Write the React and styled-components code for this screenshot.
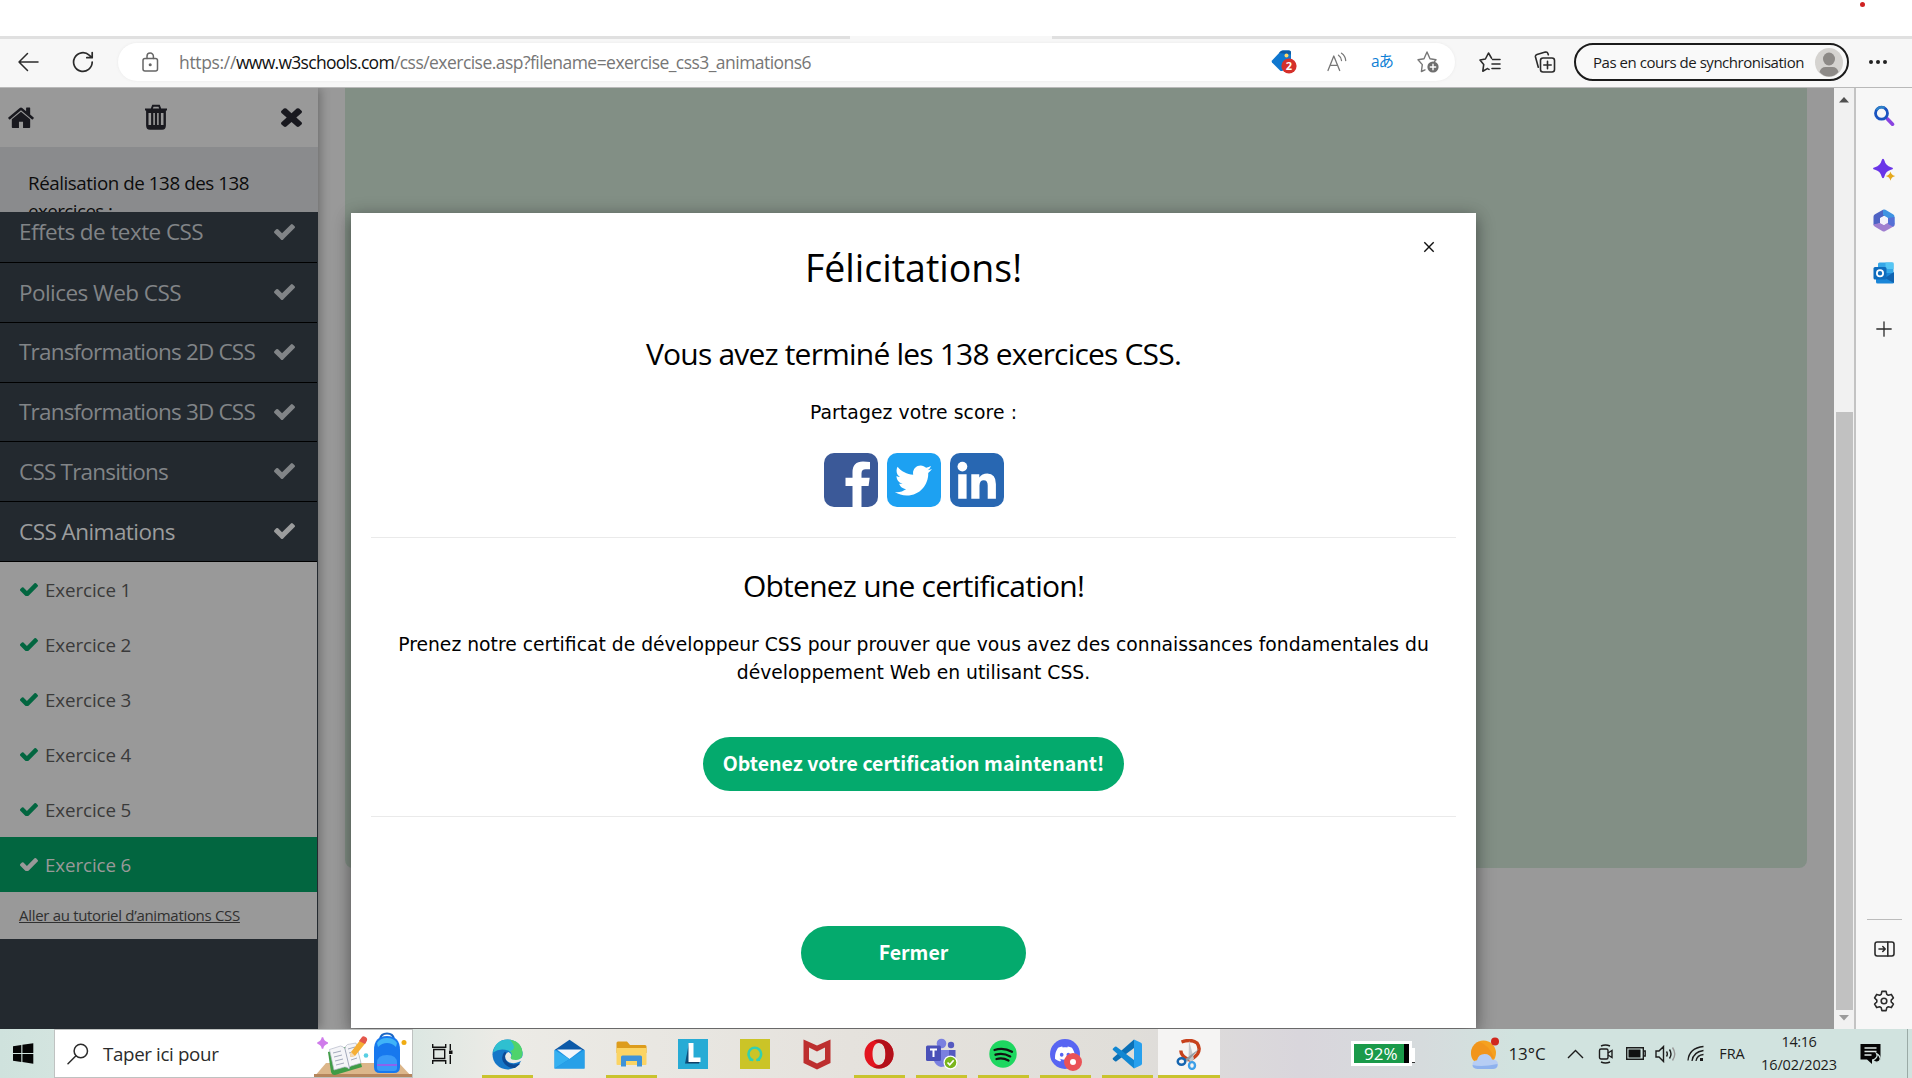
import React from "react";
import styled, { createGlobalStyle, css } from "styled-components";
import { FaTwitter } from "react-icons/fa";
import { SiDiscord } from "react-icons/si";

const ui = `"Open Sans", "Noto Sans", sans-serif`;
const verdana = `"DejaVu Sans", sans-serif`;
const source = `"Noto Sans CJK SC", "Open Sans", sans-serif`;

const Global = createGlobalStyle`
  * { box-sizing: border-box; }
  body { margin: 0; background: #fff; font-family: ${ui}; overflow: hidden; }
  svg { display: block; flex: none; }
  h1, h2, p { margin: 0; font-weight: 400; }
`;

const Screen = styled.div`
  width: 1912px;
  height: 1078px;
  display: grid;
  grid-template-rows: 36px 52px 941px 49px;
  overflow: hidden;
`;

const Text = styled.span`
  font-family: ${(p) => p.$font || ui};
  font-size: ${(p) => p.$size}px;
  line-height: ${(p) => p.$line || 24}px;
  letter-spacing: ${(p) => p.$track || 0}px;
  font-weight: ${(p) => p.$weight || 400};
  color: ${(p) => p.$color || "inherit"};
  white-space: nowrap;
`;

/* ---------- browser chrome ---------- */

const TabStrip = styled.div`
  background: #fff;
  display: flex;
  justify-content: flex-end;
  padding: 2px 47px 0 0;
`;
const RecordDot = styled.i`
  width: 5px;
  height: 5px;
  border-radius: 50%;
  background: #cf2222;
`;
const Toolbar = styled.div`
  display: flex;
  align-items: center;
  background: #f7f7f7;
  border-bottom: 1px solid #b9b9b9;
  padding: 1px 24px 0 15px;
  background-image: linear-gradient(to right, #e0e0e0 850px, #f7f7f7 850px, #f7f7f7 1052px, #e0e0e0 1052px);
  background-size: 100% 3px;
  background-repeat: no-repeat;
`;
const NavButtons = styled.div`
  display: flex;
  align-items: center;
  gap: 33px;
  width: 103px;
  padding-left: 2px;
`;
const AddressBar = styled.div`
  width: 1337px;
  height: 38px;
  border-radius: 19px;
  background: #fff;
  box-shadow: 0 0 3px #e9e9e9;
  display: flex;
  align-items: center;
  padding: 0 16px 0 24px;
`;
const Url = styled.div`
  flex: 1;
  padding-left: 20px;
  display: flex;
`;
const AddressTools = styled.div`
  display: flex;
  align-items: center;
  gap: 24px;
`;
const TagSlot = styled.div`
  padding-right: 6px;
`;
const TranslateSlot = styled.div`
  width: 22px;
  display: flex;
  justify-content: center;
  padding-bottom: 2px;
`;
const ToolbarTools = styled.div`
  display: flex;
  align-items: center;
  gap: 33px;
  padding: 0 18px 0 24px;
`;
const Profile = styled.div`
  width: 275px;
  height: 38px;
  border: 2px solid #1b1b1b;
  border-radius: 19px;
  display: flex;
  align-items: center;
  justify-content: space-between;
  padding: 0 4px 0 17px;
  background: #f9f9f9;
`;
const Dots = styled.div`
  display: flex;
  gap: 3px;
  margin-left: 20px;
  i { width: 4px; height: 4px; border-radius: 50%; background: #222; }
`;

/* ---------- page ---------- */

const Viewport = styled.div`
  display: grid;
  grid-template-columns: 1834px 22px 56px;
`;
const Page = styled.div`
  position: relative;
  display: flex;
  background: #999;
  overflow: hidden;
`;
const Side = styled.aside`
  width: 318px;
  display: flex;
  flex-direction: column;
  background: #23292f;
  box-shadow: 2px 0 10px rgba(0, 0, 0, 0.3);
  z-index: 1;
`;
const SideTop = styled.div`
  height: 59px;
  background: #999;
  display: flex;
  justify-content: space-between;
  align-items: center;
  padding: 0 16px 1px 8px;
  color: #19191f;
`;
const TrashSlot = styled.div`
  margin-right: 4px;
`;
const Progress = styled.div`
  height: 65px;
  overflow: hidden;
  background: #8a8b8d;
  padding: 22px 20px 0 28px;
  display: flex;
  flex-direction: column;
`;
const Chapter = styled.div`
  height: ${(p) => p.$height}px;
  border-bottom: 1px solid #000;
  width: 317px;
  display: flex;
  align-items: center;
  justify-content: space-between;
  padding: 0 22px ${(p) => p.$raise}px 19px;
  color: ${(p) => (p.$active ? "#9b9c9d" : "#818487")};
`;
const Exercises = styled.div`
  width: 317px;
  background: #999;
`;
const Exercise = styled.div`
  height: 55px;
  display: flex;
  align-items: center;
  gap: 7px;
  padding: 0 0 0 20px;
  background: ${(p) => (p.$current ? "#026640" : "#999")};
  color: ${(p) => (p.$current ? "#999" : "#3a3a3a")};
  svg { color: ${(p) => (p.$current ? "#999" : "#026640")}; }
`;
const TutorialLink = styled.div`
  height: 47px;
  padding: 11px 0 0 19px;
  color: #303030;
  text-decoration: underline;
`;
const Content = styled.div`
  flex: 1;
  padding: 0 27px 0 27px;
`;
const Challenge = styled.div`
  height: 780px;
  background: #828f85;
  border-radius: 0 0 8px 8px;
`;
const ModalLayer = styled.div`
  position: absolute;
  inset: 0;
  z-index: 2;
  padding: 125px 0 0 351px;
`;
const Modal = styled.div`
  position: relative;
  width: 1125px;
  height: 815px;
  background: #fff;
  color: #000;
  box-shadow: 0 4px 14px rgba(0, 0, 0, 0.32), 0 4px 20px rgba(0, 0, 0, 0.19);
  padding: 27px 20px 0;
  display: flex;
  flex-direction: column;
  align-items: center;
`;
const CloseMark = styled.div`
  position: absolute;
  top: 28px;
  right: 41px;
`;
const Block = styled.div`
  margin-top: ${(p) => p.$gap}px;
  display: flex;
  flex-direction: column;
  align-items: center;
`;
const Socials = styled.div`
  margin-top: 26px;
  display: flex;
  gap: 9px;
`;
const Social = styled.div`
  width: 54px;
  height: 54px;
  border-radius: 10px;
  background: ${(p) => p.$color};
  display: flex;
  align-items: center;
  justify-content: center;
  overflow: hidden;
  color: #fff;
`;
const Rule = styled.div`
  margin-top: ${(p) => p.$gap}px;
  height: 1px;
  align-self: stretch;
  background: #eaeaea;
`;
const Pill = styled.div`
  margin-top: ${(p) => p.$gap}px;
  width: ${(p) => p.$width}px;
  height: 54px;
  border-radius: 27px;
  background: #04aa6d;
  color: #fff;
  display: flex;
  align-items: center;
  justify-content: center;
  padding-bottom: 2px;
`;
const ScrollTrack = styled.div`
  background: #f1f1f1;
  border-right: 2px solid #c3c3c3;
  display: flex;
  flex-direction: column;
  align-items: center;
  padding: 9px 0 8px;
`;
const Thumb = styled.div`
  width: 17px;
  height: 598px;
  margin: 309px 0 auto;
  background: #c1c1c1;
`;
const EdgeRail = styled.div`
  background: #f7f7f7;
  display: flex;
  flex-direction: column;
  align-items: center;
  padding: 16px 0 16px;
`;
const RailItem = styled.div`
  width: 24px;
  height: 24px;
  display: flex;
  align-items: center;
  justify-content: center;
  margin-top: ${(p) => p.$gap}px;
`;
const RailRule = styled.div`
  width: 35px;
  height: 1px;
  background: #bcbcbc;
  margin-top: auto;
`;

/* ---------- taskbar ---------- */

const Taskbar = styled.div`
  display: flex;
  background: linear-gradient(to right, #cfe2dd 0, #d3e4df 54px, #dce7e2 413px, #ecebe6 500px, #e5e2dd 850px, #e0ded9 1130px, #d9d6dc 1300px, #d6dbdd 1420px, #d1e3df 1520px, #d1e3df 100%);
`;
const Start = styled.div`
  width: 54px;
  padding: 14px 0 0 13px;
`;
const Search = styled.div`
  width: 359px;
  height: 49px;
  background: #fff;
  border: 1px solid #bfc2c1;
  display: flex;
  align-items: center;
  padding-left: 12px;
  color: #2b2b2b;
`;
const SearchText = styled.div`
  flex: 1;
  padding-left: 14px;
`;
const TaskView = styled.div`
  width: 63px;
  padding: 15px 0 0 19px;
`;
const AppButton = styled.div`
  width: 62px;
  height: 49px;
  padding: 7px 0 0;
  display: flex;
  flex-direction: column;
  align-items: center;
  ${(p) => p.$focused && css`background: #f5f4f3;`}
`;
const IconSlot = styled.div`
  height: 36px;
  display: flex;
  align-items: center;
`;
const Underline = styled.div`
  width: ${(p) => (p.$wide ? 62 : 51)}px;
  height: 3px;
  margin-top: 3px;
  background: ${(p) => (p.$open ? "#c9c32e" : "transparent")};
`;
const BatteryWidget = styled.div`
  width: 61px;
  height: 25px;
  margin: 12px 0 0 131px;
  border: 3px solid #fff;
  background: linear-gradient(to right, #1a9a4a 50px, #000 50px);
  color: #fff;
  display: flex;
  align-items: center;
  padding-left: 10px;
`;
const BatteryNub = styled.div`
  width: 3px;
  height: 15px;
  margin: 19px 55px 0 0;
  background: #fff;
  border-bottom: 1px solid #333;
`;
const Tray = styled.div`
  display: flex;
  align-items: center;
  color: #1c1c1c;
`;
const TrayItem = styled.div`
  width: ${(p) => p.$width}px;
  display: flex;
  justify-content: center;
`;
const Clock = styled.div`
  width: 100px;
  height: 49px;
  display: flex;
  flex-direction: column;
  align-items: center;
  padding: 1px 0 0 2px;
`;
const Desktop = styled.div`
  width: 5px;
  margin-left: auto;
  border-left: 1px solid #9aaaa6;
`;

/* ---------- icons ---------- */

const Check = ({ w = 21 }) => (
  <svg width={w} height={(w * 1188) / 1550} viewBox="121 334 1550 1188" fill="currentColor">
    <path d="M1671 566q0 40-28 68l-724 724-136 136q-28 28-68 28t-68-28l-136-136-362-362q-28-28-28-68t28-68l136-136q28-28 68-28t68 28l294 295 656-657q28-28 68-28t68 28l136 136q28 28 28 68z" />
  </svg>
);
const Home = () => (
  <svg width="26" height="21" viewBox="80 220 1632 1316" fill="currentColor">
    <path d="M1472 992v480q0 26-19 45t-45 19h-384v-384h-256v384h-384q-26 0-45-19t-19-45v-480q0-1 .5-3t.5-3l575-474 575 474q1 2 1 6zm223-69l-62 74q-8 9-21 11h-3q-13 0-21-7l-692-577-692 577q-12 8-24 7-13-2-21-11l-62-74q-8-10-7-23.5t11-21.5l719-599q32-26 76-26t76 26l244 204v-195q0-14 9-23t23-9h192q14 0 23 9t9 23v408l219 182q10 8 11 21.5t-7 23.5z" />
  </svg>
);
const Trash = () => (
  <svg width="24" height="26" viewBox="0 0 24 26" fill="none" stroke="currentColor">
    <path d="M1 5.500h22M7.600 5l1.300-3.200h6.200L16.400 5" strokeWidth="1.900" />
    <path d="M3.300 6v15.500q0 3 2.600 3h12.200q2.600 0 2.600-3V6" strokeWidth="2.400" />
    <path d="M4 6h16v3H4zM4 21h16v3H4z" fill="currentColor" stroke="none" />
    <path d="M8.200 8v14M12 8v14M15.800 8v14" strokeWidth="2.200" />
  </svg>
);
const Times = () => (
  <svg width="21" height="20" viewBox="302 294 1188 1260" preserveAspectRatio="none" fill="currentColor">
    <path d="M1490 1322q0 40-28 68l-136 136q-28 28-68 28t-68-28l-294-294-294 294q-28 28-68 28t-68-28l-136-136q-28-28-28-68t28-68l294-294-294-294q-28-28-28-68t28-68l136-136q28-28 68-28t68 28l294 294 294-294q28-28 68-28t68 28l136 136q28 28 28 68t-28 68l-294 294 294 294q28 28 28 68z" />
  </svg>
);
const line = { fill: "none", stroke: "#2b2b2b", strokeWidth: 1.5, strokeLinecap: "round", strokeLinejoin: "round" };

const Back = () => (
  <svg width="22" height="20" viewBox="0 0 22 20" {...line}><path d="M10.500 1.500 2 10l8.500 8.500M2 10h19" /></svg>
);
const Reload = () => (
  <svg width="22" height="22" viewBox="0 0 22 22" {...line} strokeWidth="1.700"><path d="M20.200 11a9.300 9.300 0 1 1-3-6.800l2.800 2.400M20.200 1.500v5.200h-5.400" /></svg>
);
const Lock = () => (
  <svg width="17" height="20" viewBox="0 0 17 20" {...line} stroke="#666"><rect x="1" y="6.500" width="14.500" height="12.500" rx="2" /><path d="M5 6.500V4.300a3.200 3.200 0 0 1 6.400 0v2.200" /><circle cx="8.200" cy="12.800" r=".8" fill="#666" /></svg>
);
const Tag = () => (
  <svg width="26" height="24" viewBox="0 0 26 24">
    <path d="M1 10.500 9.500 1.500q1-1 2.500-1h6q2 0 2 2V12l-8 8.500q-1.500 1-3 0L1 12.500q-.8-1 0-2z" fill="#0f77cf" />
    <path d="M9.500 1.500q1-1 2.500-1h6q2 0 2 2v2L8 3z" fill="#0c5ba5" />
    <circle cx="15.500" cy="5.500" r="2" fill="#ffd766" />
    <circle cx="18" cy="16" r="7.600" fill="#d5302b" />
    <text x="18" y="20" fontFamily="Open Sans" fontSize="11" fontWeight="700" fill="#fff" textAnchor="middle">2</text>
  </svg>
);
const ReadAloud = () => (
  <svg width="20" height="20" viewBox="0 0 20 20" {...line} stroke="#777" strokeWidth="1.300"><path d="M1 18.500 6.800 4l5.900 14.500M3 13.400h7.700M11.500 3.200q2.700 1.800 3 5.300M14.500 1.200q4 2.700 4.200 7.300" /></svg>
);
const StarPlus = () => (
  <svg width="22" height="22" viewBox="0 0 22 22" {...line} stroke="#777" strokeWidth="1.400"><path d="M8 19.400 4.400 21l.9-6.900L1 9.300l6-1.100L10 1.500l3 6.700 6 1.100-1.500 1.700" transform="translate(0 -.5)" /><circle cx="16" cy="16" r="5.600" fill="#6f6f6f" stroke="none" /><path d="M16 13.300v5.400M13.300 16h5.400" stroke="#fff" /></svg>
);
const StarList = () => (
  <svg width="22" height="21" viewBox="0 0 22 21" {...line} strokeWidth="1.600"><path d="m8.300 16.600-4.500 2.600.9-6.600L1 8l5.400-1L9.500 1l3 5.200M13.500 7.500H21M13 12h8M13 16.500h8M8.300 16.600l1.700.8" /></svg>
);
const Collections = () => (
  <svg width="22" height="22" viewBox="0 0 22 22" {...line} strokeWidth="1.600"><rect x="6.500" y="7" width="14" height="14" rx="2.500" /><path d="M13.500 10.300v7.400M9.800 14h7.400M4.300 16.200 1.500 6Q1 4 3 3.400l8.300-2.300q2-.5 2.600 1.400l.4 1.300" /></svg>
);
const Avatar = () => (
  <svg width="28" height="29" viewBox="0 0 28 29"><ellipse cx="14" cy="14.500" rx="14" ry="14.500" fill="#d5d3d0" /><ellipse cx="14" cy="11" rx="6" ry="6.400" fill="#8d8a87" /><path d="M4.500 24q1.500-5 6-5h7q4.500 0 6 5-4 4.500-9.500 4.500T4.500 24z" fill="#8d8a87" /></svg>
);
const Facebook = () => (
  <svg width="54" height="54" viewBox="0 0 54 54"><path d="M28.500 54V33h-7v-8.300h7v-5.500Q28.500 8.500 39 8.500q3.800 0 7 .4v7.300h-4.300q-4.200 0-4.200 4.200v4.300h8.200l-1.100 8.300h-7.100v21z" fill="#fff" /></svg>
);
const LinkedIn = () => (
  <svg width="54" height="54" viewBox="0 0 54 54" fill="#fff"><circle cx="12.400" cy="13.600" r="4.900" /><path d="M8.200 21.300h8.400v24.500H8.200zM21.300 21.300h8v3.300q2.600-4.200 8-4.200 8.600 0 8.600 10.500v14.900h-8.200V32.500q0-5.300-4-5.300t-4.200 5.300v13.300h-8.200z" /></svg>
);
const CloseX = () => (
  <svg width="12" height="12" viewBox="0 0 12 12" stroke="#111" strokeWidth="1.400"><path d="m1.300 1.300 9.400 9.400m0-9.400-9.400 9.400" /></svg>
);
const RailSearch = () => (
  <svg width="22" height="22" viewBox="0 0 22 22" fill="none"><path d="m14.500 14 5 5.200" stroke="#8a43e0" strokeWidth="3.600" strokeLinecap="round" /><circle cx="8.500" cy="8.200" r="6" stroke="#1a53c0" strokeWidth="2.800" /><path d="M3.500 5a6 6 0 0 1 8-2" stroke="#2f83c8" strokeWidth="2.600" /></svg>
);
const RailSpark = () => (
  <svg width="23" height="23" viewBox="0 0 23 23"><path d="M10 .8q1 0 1.500 2 1.200 5 6.500 6.400 2 .5 2 1.300t-2 1.300q-5.300 1.400-6.500 6.400-.5 2-1.500 2t-1.500-2Q7.300 13.200 2 11.800q-2-.5-2-1.300t2-1.300q5.300-1.400 6.500-6.400.5-2 1.500-2z" fill="#6a35e8" /><path d="M17.500 13.500q.8 3.600 4.800 4.500-4 .9-4.800 4.700-.8-3.800-4.800-4.700 4-.9 4.800-4.500z" fill="#e5a91d" /></svg>
);
const Rail365 = () => (
  <svg width="22" height="23" viewBox="0 0 22 23"><path d="M10 .8 2 5.200Q.5 6 .5 7.800v8.400l6.500-2V9l6.500-3.500V2z" fill="#4f63c4" /><path d="M10 .8q1.200-.6 2.400 0l7.600 4.400q1.500.8 1.500 2.600v7.500L15 12V9l-5-3z" fill="#3f93e2" /><path d="M.5 15.500q0 1.500 1.500 2.300l7.600 4.400q1.200.6 2.400 0l8-4.400q1.500-.8 1.500-2.600V14L15 12l-4 4-4-2z" fill="#a07fd0" /><path d="M21.500 8v8q0 1-1.500 1.800L15 15V9z" fill="#5670d6" /><path d="m11 7.300 4 2.200v4.200l-4 2.300-4-2.300V9.500z" fill="#f4f2fb" /></svg>
);
const RailOutlook = () => (
  <svg width="22" height="22" viewBox="0 0 22 22"><rect x="5" y=".5" width="15.500" height="13" rx="1.500" fill="#35a7e8" /><rect x="12.500" y=".5" width="8" height="6.500" fill="#55c6f4" /><path d="M3 11h18v9q0 1.500-1.500 1.500H4.500Q3 21.500 3 20z" fill="#1a86d8" /><path d="m21 10-9 6 9 5z" fill="#1063b0" /><rect x=".5" y="5" width="13" height="12.500" rx="1.500" fill="#0f6cbd" /><circle cx="7" cy="11.200" r="3.100" fill="none" stroke="#fff" strokeWidth="1.800" /></svg>
);
const Plus = () => (
  <svg width="16" height="16" viewBox="0 0 16 16" {...line} strokeWidth="1.300"><path d="M8 .8v14.400M.8 8h14.400" /></svg>
);
const PanelIcon = () => (
  <svg width="21" height="16" viewBox="0 0 21 16" {...line} strokeWidth="1.600"><rect x="1" y="1" width="19" height="14" rx="2.200" /><path d="M13.800 1v14M5 8h6M8.800 5.500 11.200 8l-2.400 2.500" /></svg>
);
const Gear = () => (
  <svg width="22" height="22" viewBox="0 0 22 22" {...line} strokeWidth="1.600"><path d="M8.900 1.400h4.200l.7 3 1.500.9 3-.9 2.100 3.600-2.200 2.100v1.800l2.200 2.100-2.100 3.600-3-.9-1.500.9-.7 3H8.900l-.7-3-1.500-.9-3 .9L1.600 14l2.200-2.100v-1.800L1.600 8l2.100-3.600 3 .9 1.500-.9z" /><circle cx="11" cy="11" r="2.800" /></svg>
);
const Windows = () => (
  <svg width="21" height="21" viewBox="0 0 21 21" fill="#050505"><path d="M0 3.300 8.300 2v8H0zM9.400 1.800 20.300.3V10H9.400zM0 11h8.300v8L0 17.700zM9.400 11h10.900v9.700L9.400 19.100z" /></svg>
);
const Magnifier = () => (
  <svg width="22" height="22" viewBox="0 0 22 22" {...line}><circle cx="13.800" cy="8" r="6.700" /><path d="M9 12.800 1 20.800" /></svg>
);
const Backpack = () => (
  <svg width="98" height="47" viewBox="0 0 98 47">
    <path d="M12 33h73l13 14H0z" fill="#dcb68a" /><path d="M0 44h98v3H0z" fill="#b5865c" />
    <path d="M8.500 7.500q.8 4.400 5.200 5.500-4.400 1-5.200 5.500Q7.700 14 3.500 13q4.200-1 5-5.500z" fill="#cf7bea" stroke="#cf7bea" strokeWidth="1.500" />
    <path d="m14 22 28-8 6 23-27 8q-3 .3-4-3z" fill="#3f9c46" />
    <path d="m15.500 19.500 11-3.500q3 .3 4.500 3 0-3 2.500-4.500L42 13l5 20-10 3q-2 .5-2 3-2-2.500-4.500-2L20 40z" fill="#f5f5f8" stroke="#b5b9c8" strokeWidth=".7" />
    <path d="m31 19 4.500 19M19 23l8-2M20 27l8-2M21 31l8-2M22 35l8-2M34 19l7-2M35 23l7-2M37 30l6-2" stroke="#9aa0b4" strokeWidth=".9" />
    <path d="m37 22 10-13 5 3.500L41 26l-5 1z" fill="#f5ae35" /><path d="m45 11 3-4q1-1.500 3.500 0t1.300 4L51 14z" fill="#e4574c" /><path d="m37 22-1 5 5-1z" fill="#f4d9b4" />
    <circle cx="52" cy="25.500" r="2.300" fill="#58cfe3" /><circle cx="90" cy="12.500" r="2.500" fill="#f0ac12" />
    <path d="M66 9q1-5.500 7-5.500T80 9" fill="none" stroke="#1b66c4" strokeWidth="2" />
    <path d="M60 20Q60 6 73 6t13 14v17q0 6-6 6H66q-6 0-6-6z" fill="#1778ee" />
    <path d="M63 13q3-5 10-5t10 5l-1 4q-4-4-9-4t-9 4z" fill="#3fb3f8" />
    <path d="M63 33q0-8 10-8t10 8v5q0 3-3 3H66q-3 0-3-3z" fill="#3a9af8" /><path d="M63 34h20v2H63z" fill="#8d62ee" />
  </svg>
);
const TaskViewIcon = () => (
  <svg width="21" height="20" viewBox="0 0 21 20" fill="none" stroke="#111" strokeWidth="1.400"><path d="M.7 0v3.200h13V0M1.700 5.500h11v9H1.700zM.7 20v-3.200h13V20M18.300 0v6M18.300 11v9" /><path d="M17 6.500h3.500v3.500H17z" fill="#111" stroke="none" /></svg>
);
const Edge = () => (
  <svg width="31" height="31" viewBox="0 0 31 31">
    <circle cx="15.500" cy="15.500" r="15" fill="#1677c8" />
    <path d="M1 13.500Q3.500.5 16 .5q13 1 14.500 13.500 0 7-7 7.500-6-.3-4.500-3.500 2-4-3-6.500Q8 8.500 1 13.500z" fill="#2fc0d0" />
    <path d="M18 .700q12 2 12.500 13.300 0 7-7 7.500-6-.3-4.500-3.500 2-4-1-6Q26 10 18 .7z" fill="#4fd36c" />
    <path d="M13 12.500q-4.500 4-2 10 4 7 12 6.500l4.500-3.500q1-1.500-.5-1-7 2.500-11.500-1.500-3.500-3.500-1-8.500z" fill="#0d4a94" />
    <path d="M16.500 13q-3 1-3.400 4.500.4 4.500 4.500 6 5 1.500 9-.5l4.400-2v-4q-3 4.300-7.500 4-6-.3-4.500-3.500 1-3-2.500-4.500z" fill="#ecebe6" />
  </svg>
);
const Mail = () => (
  <svg width="31" height="30" viewBox="0 0 31 30"><path d="M.5 11 15.500.8 30.500 11z" fill="#0c5aa8" /><path d="M.5 11h30v18.500H.5z" fill="#1e90e0" /><path d="M3 10.500h25L15.500 20z" fill="#f2f5fa" /><path d="m.5 11 15 9-15 9.500z" fill="#35b0f0" /><path d="M30.500 11 .5 29.500h30z" fill="#28a0e8" /></svg>
);
const Explorer = () => (
  <svg width="31" height="26" viewBox="0 0 31 26"><path d="M.5 2q0-1.500 1.500-1.500h9l3 3.500H29q1.500 0 1.500 1.500V12H.5z" fill="#dd9c1c" /><path d="M.5 7h30v16q0 1-1 1h-28q-1 0-1-1z" fill="#fbd464" /><path d="M5 25.500V16q0-1.500 1.500-1.500h18q1.500 0 1.500 1.500v9.500h-5V20H10v5.500z" fill="#3f93d8" /></svg>
);
const LTile = () => (
  <svg width="30" height="30" viewBox="0 0 30 30"><path d="M0 0h30v30H0z" fill="#27abd5" /><path d="m11 4-4 20.500L11 22z" fill="#0f4f7c" /><path d="M7 24.500 11 21h11l-1 3.500z" fill="#103f66" /><path d="M10.500 4h5v14.500h7V23h-12z" fill="#fff" /></svg>
);
const OTile = () => (
  <svg width="30" height="30" viewBox="0 0 30 30"><path d="M0 0h30v30H0z" fill="#cbc427" /><path d="M13 21.200Q8.500 19.500 8.500 15a6.300 6.300 0 0 1 12.600 0q0 4.500-4.500 6.200" fill="none" stroke="#32d0b0" strokeWidth="2.600" /><path d="M9.500 21.300h3.800M16.300 21.300H20" stroke="#32d0b0" strokeWidth="1.600" /></svg>
);
const McAfee = () => (
  <svg width="28" height="31" viewBox="0 0 28 31"><path d="m.5.500 13.500 6 13.500-6V24L14 30.500.5 24zM6 8.500v12L14 24.500l8-4v-12l-8 4z" fill="#bd2f2f" fillRule="evenodd" /></svg>
);
const Opera = () => (
  <svg width="30" height="30" viewBox="0 0 30 30"><path d="M15 .5C6.500.5.500 7 .5 15S6.500 29.500 15 29.500 29.500 23 29.500 15 23.500.5 15 .5zm0 3.500c4 0 6.500 4.500 6.500 11S19 26 15 26 8.500 21.500 8.500 15 11 4 15 4z" fill="#e3141f" /><path d="M15 .5C23.500.5 29.500 7 29.500 15S23.500 29.500 15 29.500q-3 0-6-1.500 2.500-.5 6-2c4 0 6.500-4.500 6.500-11S19 4 15 4Q12 3 10 1.500 12 .5 15 .5z" fill="#b3101a" /></svg>
);
const Teams = () => (
  <svg width="33" height="32" viewBox="0 0 33 32"><circle cx="16.500" cy="5.500" r="4.800" fill="#7a80e0" /><circle cx="26" cy="7" r="3.200" fill="#5559c0" /><path d="M21 12h9.500v9q-1 5-6 5z" fill="#5559c0" /><path d="M9 12h15v9q-1 8-8 8-5-1-7-6z" fill="#7a80e0" /><rect x="1" y="7.500" width="15" height="15.500" rx="1.500" fill="#4a50b8" /><path d="M5 11.500h7M8.500 11.500V19" stroke="#fff" strokeWidth="2" /><circle cx="25.500" cy="24.500" r="7" fill="#fff" /><circle cx="25.500" cy="24.500" r="5.800" fill="#7ab51d" /><path d="m22.500 24.500 2.200 2.300 4-4.600" fill="none" stroke="#fff" strokeWidth="1.700" /></svg>
);
const Spotify = () => (
  <svg width="28" height="28" viewBox="0 0 28 28"><circle cx="14" cy="14" r="13.700" fill="#1ed760" /><path d="M5.500 10q9-3 17.500 1.800M6.500 14.700q7.500-2.200 14.700 1.700M7.500 19q6-1.800 12 1.500" fill="none" stroke="#121212" strokeWidth="2.300" strokeLinecap="round" /></svg>
);
const DiscordBox = styled.div`
  width: 30px;
  height: 30px;
  border-radius: 50%;
  background: #5865f2;
  color: #fff;
  display: flex;
  align-items: center;
  justify-content: center;
  position: relative;
`;
const DiscordBadge = styled.i`
  position: absolute;
  right: -2px;
  bottom: -2px;
  width: 18px;
  height: 18px;
  border-radius: 50%;
  border: 6px solid #ea5257;
  background: #fff;
`;
const VSCode = () => (
  <svg width="30" height="30" viewBox="0 0 30 30"><path d="m22 .5 7 3.300q1 .5 1 1.700v19q0 1.200-1 1.700l-7 3.300z" fill="#27a0ee" /><path d="M22 .5 1 19q-.8.800 0 1.600l2 1.700q.7.500 1.500 0L22 9z" fill="#0b70b6" /><path d="M22 29.500 1 11q-.8-.8 0-1.600l2-1.700q.7-.5 1.500 0L22 21z" fill="#1187d2" /></svg>
);
const Snip = () => (
  <svg width="27" height="31" viewBox="0 0 27 31" fill="none"><path d="M5.500 3Q15-.5 21 4q4 5.500.5 11-3.500 4.500-8 6Q5 17.500 4.800 11.500" stroke="#c7411c" strokeWidth="3.400" /><path d="M13 1.500 18 20l-2.500 3-3-2z" fill="#c3c7cb" /><path d="M23.500 9.500 9.500 20l1.500 3z" fill="#9299a0" /><ellipse cx="5.500" cy="22.500" rx="3.800" ry="3.300" stroke="#1565b0" strokeWidth="2.400" /><ellipse cx="16" cy="26.500" rx="3" ry="3.400" stroke="#3c9fe8" strokeWidth="2.400" /></svg>
);
const Weather = () => (
  <svg width="30" height="34" viewBox="0 -1 30 34"><circle cx="13.500" cy="15" r="12.500" fill="#f5a11f" /><path d="M3 22a12.500 12.500 0 0 1 6-18.500Q20 8 24 20z" fill="#ee8a1a" opacity=".5" /><path d="M7.500 31q-5-.5-5-4.500 0-4 4.500-4.300Q8.500 16 14.500 16q6 0 7.500 5.500 6 0 6 4.700 0 4.500-5 4.800z" fill="#b6cdf4" /><path d="M7.500 31q-5-.5-5-4 9 2.500 25-1 .5 4.500-4.500 5z" fill="#8eb2ee" /><circle cx="25" cy="3.500" r="4" fill="#d0271d" /></svg>
);
const thin = { fill: "none", stroke: "#1c1c1c", strokeWidth: 1.4 };
const Chevron = () => <svg width="17" height="10" viewBox="0 0 17 10" {...thin}><path d="m1 9 7.500-7.500L16 9" /></svg>;
const Meet = () => <svg width="16" height="20" viewBox="0 0 16 20" {...thin}><rect x="1.500" y="5" width="8.500" height="10" rx="1.500" /><path d="m10 9 4-2.500v7L10 11M3 2q4.500-2 9 0M3 18q4.500 2 9 0" /></svg>;
const Battery = () => <svg width="20" height="13" viewBox="0 0 20 13"><path d="M.7.700h16.600v11.600H.7zM17.500 4h1.700v5h-1.700" {...thin} /><path d="M2.500 2.500h12v8h-12z" fill="#111" /></svg>;
const Volume = () => <svg width="22" height="18" viewBox="0 0 22 18" {...thin}><path d="M1 6v6h3l4.500 4.500v-15L4 6zM11.500 6.500q1.600 2.500 0 5M14.500 4.500q3 4.500 0 9" /><path d="M17.500 2.500q4.500 6.500 0 13" stroke="#999" /></svg>;
const Wifi = () => <svg width="18" height="17" viewBox="0 0 18 17" {...thin} strokeWidth="1.300"><path d="M1 15.500Q2 3 16.500 1.500M5 16Q6 7 16.500 5.500M9 16q1-6 7.500-6.500" /><path d="M13 13h3v3h-3z" fill="#1c1c1c" stroke="none" /></svg>;
const Notice = () => (
  <svg width="22" height="22" viewBox="0 0 22 22"><path d="M.5 1h20v15.500H12V21l-5-4.500H.5z" fill="#050505" /><path d="M4.500 5h12M4.500 8.500h12M4.500 12h7" stroke="#dfe9e6" strokeWidth="1.400" /><path d="M16.500 10.500q2 4-3.500 6.500 3 3.800 6.500 1 2.500-4-3-7.500z" fill="#050505" stroke="#d1e3df" strokeWidth="1.200" /></svg>
);
const Arrow = ({ up }) => (
  <svg width="10" height="6" viewBox="0 0 10 6"><path d={up ? "M5 0l5 5.500H0z" : "M0 0h10L5 5.500z"} fill={up ? "#505050" : "#9b9b9b"} /></svg>
);

const chapters = [
  ["Effets de texte CSS", 51, 10, -0.57],
  ["Polices Web CSS", 60, 0, -0.55],
  ["Transformations 2D CSS", 60, 1, -0.81],
  ["Transformations 3D CSS", 59, 0, -0.81],
  ["CSS Transitions", 60, 0, -0.78],
  ["CSS Animations", 60, 0, -0.54],
];

const apps = [
  [<Edge />, true], [<Mail />], [<Explorer />, true], [<LTile />], [<OTile />], [<McAfee />],
  [<Opera />, true], [<Teams />, true], [<Spotify />, true],
  [<DiscordBox><SiDiscord size={20} /><DiscordBadge /></DiscordBox>, true],
  [<VSCode />, true], [<Snip />, true, true],
];

export default function App() {
  return (
    <Screen>
      <Global />
      <TabStrip><RecordDot /></TabStrip>
      <Toolbar>
        <NavButtons><Back /><Reload /></NavButtons>
        <AddressBar>
          <Lock />
          <Url>
            <Text $size={17.5} $track={-0.34} $color="#767676">https://</Text>
            <Text $size={17.5} $track={-0.7} $color="#111">www.w3schools.com</Text>
            <Text $size={17.5} $track={-0.54} $color="#767676">/css/exercise.asp?filename=exercise_css3_animations6</Text>
          </Url>
          <AddressTools>
            <TagSlot><Tag /></TagSlot>
            <ReadAloud />
            <TranslateSlot>
              <Text $size={15.5} $track={-1} $color="#0f7fd6" $font={`"Open Sans", "Noto Sans CJK JP", sans-serif`}>aあ</Text>
            </TranslateSlot>
            <StarPlus />
          </AddressTools>
        </AddressBar>
        <ToolbarTools><StarList /><Collections /></ToolbarTools>
        <Profile><Text $size={15} $track={-0.46} $color="#1b1b1b">Pas en cours de synchronisation</Text><Avatar /></Profile>
        <Dots><i /><i /><i /></Dots>
      </Toolbar>
      <Viewport>
        <Page>
          <Side>
            <SideTop><Home /><TrashSlot><Trash /></TrashSlot><Times /></SideTop>
            <Progress>
              <Text $size={18.75} $line={28} $track={-0.43} $color="#0c0c0c">Réalisation de 138 des 138</Text>
              <Text $size={18.75} $line={28} $track={-0.55} $color="#0c0c0c">exercices :</Text>
            </Progress>
            {chapters.map(([name, h, raise, track], i) => (
              <Chapter key={name} $height={h} $raise={raise} $active={i === 5}>
                <Text $size={22.5} $line={30} $track={track}>{name}</Text>
                <Check />
              </Chapter>
            ))}
            <Exercises>
              {[1, 2, 3, 4, 5, 6].map((n) => (
                <Exercise key={n} $current={n === 6}>
                  <Check w={18} />
                  <Text $size={18.75} $line={28} $track={-0.1}>{`Exercice ${n}`}</Text>
                </Exercise>
              ))}
              <TutorialLink><Text $size={15} $track={-0.31}>Aller au tutoriel d’animations CSS</Text></TutorialLink>
            </Exercises>
          </Side>
          <Content><Challenge /></Content>
          <ModalLayer>
            <Modal>
              <CloseMark><CloseX /></CloseMark>
              <Text as="h1" $size={37.5} $line={56}>Félicitations!</Text>
              <Block $gap={38}><Text as="h2" $size={30} $line={40} $track={-0.81}>Vous avez terminé les 138 exercices CSS.</Text></Block>
              <Block $gap={25}><Text as="p" $font={verdana} $size={18.75} $line={28} $track={0.09}>Partagez votre score :</Text></Block>
              <Socials>
                <Social $color="#3b5998"><Facebook /></Social>
                <Social $color="#1da1f2"><FaTwitter size={37} /></Social>
                <Social $color="#2867b2"><LinkedIn /></Social>
              </Socials>
              <Rule $gap={30} />
              <Block $gap={28}><Text as="h2" $size={30} $line={40} $track={-0.76}>Obtenez une certification!</Text></Block>
              <Block $gap={25}>
                <Text as="p" $font={verdana} $size={18.75} $line={28}>Prenez notre certificat de développeur CSS pour prouver que vous avez des connaissances fondamentales du</Text>
                <Text as="p" $font={verdana} $size={18.75} $line={28}>développement Web en utilisant CSS.</Text>
              </Block>
              <Pill $gap={50} $width={421}><Text $font={source} $weight={700} $size={19.5} $line={28} $track={0.03}>Obtenez votre certification maintenant!</Text></Pill>
              <Rule $gap={25} />
              <Pill $gap={109} $width={225}><Text $font={source} $weight={700} $size={19.5} $line={28}>Fermer</Text></Pill>
            </Modal>
          </ModalLayer>
        </Page>
        <ScrollTrack><Arrow up /><Thumb /><Arrow /></ScrollTrack>
        <EdgeRail>
          <RailItem $gap={0}><RailSearch /></RailItem>
          <RailItem $gap={29}><RailSpark /></RailItem>
          <RailItem $gap={27}><Rail365 /></RailItem>
          <RailItem $gap={29}><RailOutlook /></RailItem>
          <RailItem $gap={32}><Plus /></RailItem>
          <RailRule />
          <RailItem $gap={17}><PanelIcon /></RailItem>
          <RailItem $gap={28}><Gear /></RailItem>
        </EdgeRail>
      </Viewport>
      <Taskbar>
        <Start><Windows /></Start>
        <Search>
          <Magnifier />
          <SearchText><Text $size={18.75} $track={-0.36}>Taper ici pour</Text></SearchText>
          <Backpack />
        </Search>
        <TaskView><TaskViewIcon /></TaskView>
        {apps.map(([icon, open, focused], i) => (
          <AppButton key={i} $focused={focused}>
            <IconSlot>{icon}</IconSlot>
            <Underline $open={open} $wide={focused} />
          </AppButton>
        ))}
        <BatteryWidget><Text $size={17} $line={20}>92%</Text></BatteryWidget>
        <BatteryNub />
        <Tray>
          <TrayItem $width={30}><Weather /></TrayItem>
          <TrayItem $width={54}><Text $size={17} $track={-0.1}>13°C</Text></TrayItem>
          <TrayItem $width={42}><Chevron /></TrayItem>
          <TrayItem $width={20}><Meet /></TrayItem>
          <TrayItem $width={40}><Battery /></TrayItem>
          <TrayItem $width={20}><Volume /></TrayItem>
          <TrayItem $width={40}><Wifi /></TrayItem>
          <TrayItem $width={32}><Text $size={14.5}>FRA</Text></TrayItem>
          <Clock><Text $size={14.5} $line={23} $track={-0.4}>14:16</Text><Text $size={14.5} $line={23} $track={-0.1}>16/02/2023</Text></Clock>
          <TrayItem $width={46}><Notice /></TrayItem>
        </Tray>
        <Desktop />
      </Taskbar>
    </Screen>
  );
}
